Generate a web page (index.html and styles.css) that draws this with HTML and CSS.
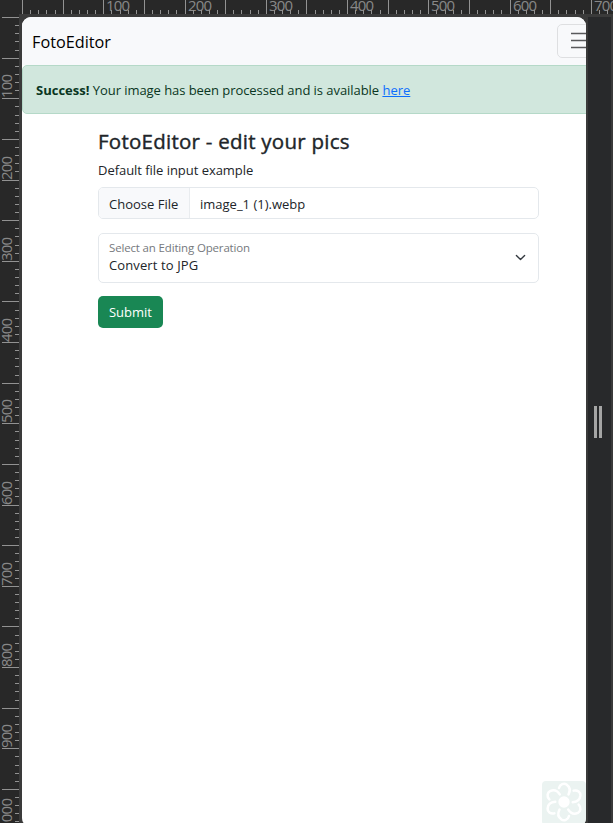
FILE: index.html
```
<!DOCTYPE html>
<html lang="en">
<head>
<meta charset="utf-8">
<title>FotoEditor</title>
<link rel="stylesheet" href="styles.css">
</head>
<body>
<div class="workspace">
  <svg class="ruler ruler-top" id="ruler-top" width="613" height="14"></svg>
  <svg class="ruler ruler-left" id="ruler-left" width="19" height="809"></svg>
  <div class="stage">
    <div class="page">
      <nav class="navbar">
        <span class="brand">FotoEditor</span>
        <button class="toggler" aria-label="Menu">
          <svg width="24" height="24" viewBox="0 0 24 24"><path d="M0 4.5H24M0 11.5H24M0 18.5H24" stroke="#58595b" stroke-width="1.6"/></svg>
        </button>
      </nav>
      <div class="alert"><strong>Success!</strong> <span class="message">Your image has been processed and is available</span> <a href="#">here</a></div>
      <main class="content">
        <h1>FotoEditor - edit your pics</h1>
        <div class="label">Default file input example</div>
        <div class="file"><span class="choose">Choose File</span><span class="filename">image_1 (1).webp</span></div>
        <div class="select">
          <div><div class="select-label">Select an Editing Operation</div><div class="select-value">Convert to JPG</div></div>
          <svg width="11" height="11" viewBox="0 0 16 16"><path d="m2 5 6 6 6-6" fill="none" stroke="#343a40" stroke-width="2" stroke-linecap="round" stroke-linejoin="round"/></svg>
        </div>
        <button class="submit">Submit</button>
      </main>
      <svg class="badge" width="44" height="44" viewBox="0 0 44 44">
        <rect width="44" height="44" rx="4" fill="#ebf3f1"/>
        <circle cx="22" cy="21" r="5.7" fill="#fff"/>
        <g fill="none" stroke="#fff" stroke-width="2.5" stroke-linecap="round">
          <path id="petal" d="M17 7C18 3 22 1.800 24.500 3.500C28 6 28.300 10 26.500 13.500"/>
          <use href="#petal" transform="rotate(60 22 21)"/>
          <use href="#petal" transform="rotate(120 22 21)"/>
          <use href="#petal" transform="rotate(180 22 21)"/>
          <use href="#petal" transform="rotate(240 22 21)"/>
          <use href="#petal" transform="rotate(300 22 21)"/>
        </g>
      </svg>
    </div>
    <div class="resize"><span class="grip"></span></div>
  </div>
</div>
<script src="ruler.js"></script>
</body>
</html>
```
FILE: styles.css
```
* { box-sizing: border-box; }
body {
  margin: 0;
  background: #3a3a3a;
  font-family: "Open Sans", "Noto Sans", sans-serif;
  font-size: 13px;
  line-height: 20px;
  color: #212529;
}
.workspace {
  display: grid;
  grid-template: 14px 809px / 19px 594px;
  width: 613px;
  height: 823px;
  overflow: hidden;
}
.ruler { display: block; background: #282828; fill: #929292; }
.ruler text {
  font-family: "Open Sans", "Noto Sans", sans-serif;
  font-size: 15px;
  font-weight: 400;
  fill: #888;
}
.ruler-top { grid-column: 1 / 3; }
.stage { display: flex; overflow: hidden; padding: 3px 2px 0 3px; }
.page {
  position: relative;
  flex: none;
  width: 564px;
  height: 810px;
  margin-right: 2px;
  overflow: hidden;
  border-radius: 9px;
  background: #fff;
}
.navbar {
  display: flex;
  align-items: center;
  width: 590px;
  height: 48px;
  padding-left: 10px;
  background: #f8f9fb;
}
.brand { flex: none; width: 525px; font-size: 16.25px; line-height: 24px; color: #000; padding-top: 2px; }
.toggler {
  display: flex;
  align-items: center;
  flex: none;
  width: 50px;
  height: 34px;
  padding: 0 0 0 13px;
  border: 1px solid #dedfe1;
  border-radius: 5px;
  background: transparent;
}
.alert {
  width: 580px;
  height: 49px;
  padding: 14px 13px;
  border: 1px solid #b5d9c8;
  border-radius: 5px;
  background: #d1e7dd;
  color: #0a3622;
  white-space: nowrap;
}
.message { letter-spacing: -.06px; }
.alert a { color: #0d6efd; }
.content { width: 441px; margin-left: 76px; padding-top: 14px; }
h1 {
  margin: 0;
  font-size: 20.5px;
  font-weight: 500;
  line-height: 26px;
  letter-spacing: .25px;
  white-space: nowrap;
  -webkit-text-stroke: .4px #212529;
}
.label { margin-top: 6px; letter-spacing: -.04px; }
.file {
  display: flex;
  height: 32px;
  margin-top: 7px;
  border: 1px solid #e4e8ec;
  border-radius: 5px;
  overflow: hidden;
  line-height: 32px;
}
.choose { width: 91px; padding-left: 10px; background: #f8f9fb; border-right: 1px solid #e9ecef; white-space: nowrap; }
.filename { padding-left: 10px; }
.select {
  display: flex;
  justify-content: space-between;
  align-items: center;
  height: 50px;
  margin-top: 14px;
  padding: 0 12px 1px 10px;
  border: 1px solid #e4e8ec;
  border-radius: 5px;
}
.select-label { color: #76797d; font-size: 11.5px; letter-spacing: -.16px; line-height: 15px; }
.select-value { line-height: 20px; letter-spacing: .12px; }
.submit {
  display: block;
  width: 65px;
  height: 32px;
  margin-top: 13px;
  padding: 0;
  border: 0;
  border-radius: 5px;
  background: #198754;
  color: #fff;
  font: inherit;
}
.badge { position: absolute; left: 520px; top: 764px; }
.resize {
  display: flex;
  justify-content: center;
  width: 23px;
  height: 807px;
  padding-right: 3px;
  background: #28292b;
}
.grip {
  width: 8px;
  height: 32px;
  margin-top: 389px;
  border: solid #a5a5a5;
  border-width: 0 3px;
}
```
FILE: ruler.js
```
const NS = "http://www.w3.org/2000/svg";
const STEP = 8.125;

function add(parent, name, attrs, text) {
  const el = document.createElementNS(NS, name);
  for (const key in attrs) el.setAttribute(key, attrs[key]);
  if (text) el.textContent = text;
  parent.appendChild(el);
}

const topRuler = document.getElementById("ruler-top");
for (let i = 0; i <= 72; i++) {
  const x = Math.round(22 + i * STEP);
  const major = i % 5 === 0;
  add(topRuler, "rect", { x, y: major ? 0 : 10, width: 1, height: major ? 14 : 4 });
  if (i && i % 10 === 0) add(topRuler, "text", { x: x + 3, y: 11, textLength: 24 }, String(i * 10));
}

const leftRuler = document.getElementById("ruler-left");
for (let i = 0; i <= 100; i++) {
  const y = Math.round(3 + i * STEP);
  const major = i % 5 === 0;
  add(leftRuler, "rect", { x: major ? 2 : 15, y, width: major ? 17 : 4, height: 1 });
  if (i && i % 10 === 0) {
    const label = String(i * 10);
    add(leftRuler, "text", { transform: `translate(12 ${y}) rotate(-90)`, textLength: label.length * 8 }, label);
  }
}
```
